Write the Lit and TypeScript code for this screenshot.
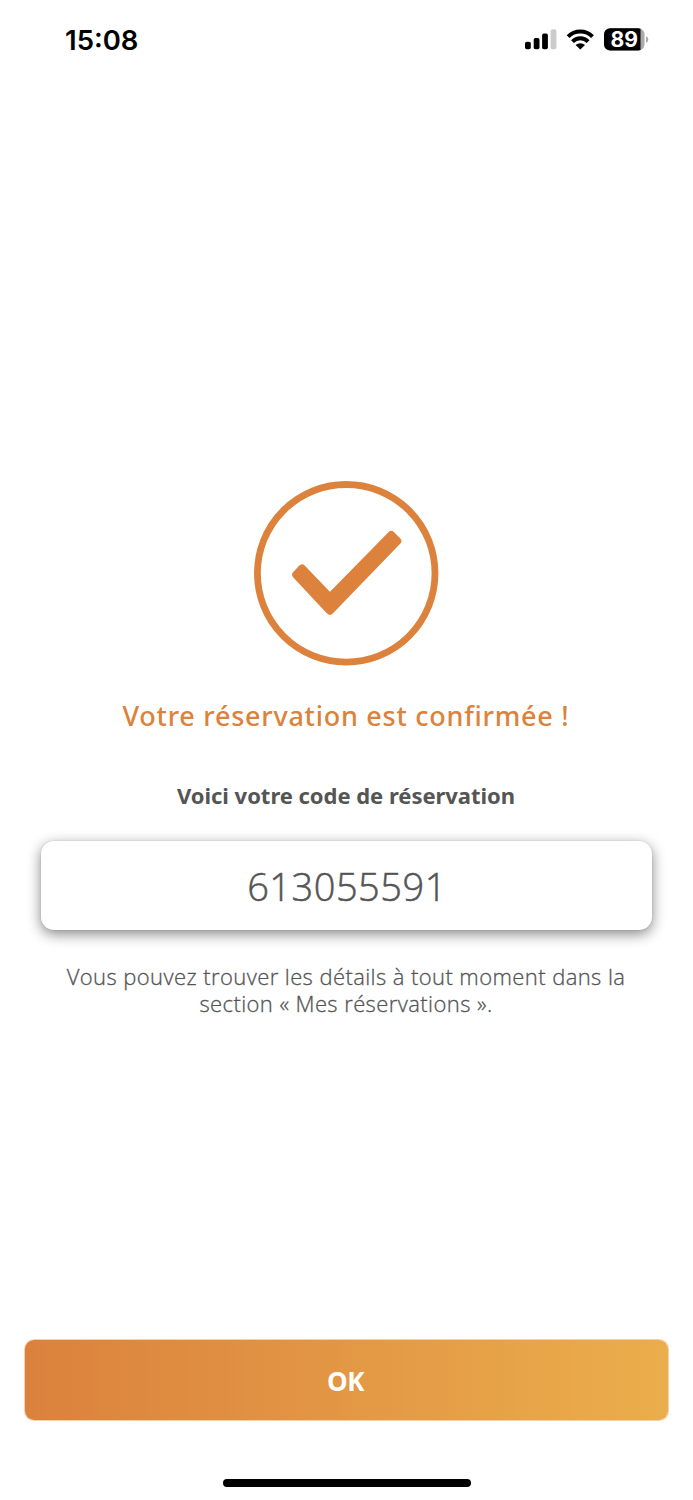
import { LitElement, html, css } from "lit";
import { customElement, property } from "lit/decorators.js";

@customElement("status-bar")
class StatusBar extends LitElement {
  @property() time = "15:08";
  @property({ type: Number }) battery = 89;

  static styles = css`
    :host {
      display: flex;
      justify-content: space-between;
      height: 80px;
      padding: 0 43px 0 65px;
      box-sizing: border-box;
      font-family: Inter, "Liberation Sans", sans-serif;
    }
    .time {
      font-size: 27.5px;
      font-weight: 600;
      line-height: 80px;
      color: #000;
    }
    .icons {
      display: block;
      width: 126px;
      height: 80px;
    }
    .level {
      font-size: 21px;
      font-weight: 700;
      fill: #fff;
    }
  `;

  render() {
    return html`
      <span class="time">${this.time}</span>
      <svg class="icons" viewBox="524 0 126 80">
        <rect x="525" y="41.7" width="5.8" height="7.6" rx="1.8" />
        <rect x="533.7" y="38" width="5.8" height="11.3" rx="1.8" />
        <rect x="542.1" y="33.6" width="5.8" height="15.7" rx="1.8" />
        <rect x="550.6" y="29.3" width="5.8" height="20" rx="1.8" fill="#cbcbcb" />
        <g fill="none" stroke="#000" stroke-width="4">
          <path d="M568.1 36.6a17.2 17.2 0 0 1 24.4 0" />
          <path d="M572.5 41.6a11 11 0 0 1 15.6 0" />
        </g>
        <path d="M580.3 49.6l-4.7-4.5a6.6 6.6 0 0 1 9.4 0z" />
        <clipPath id="cell"><rect x="604" y="28.2" width="40.5" height="22.3" rx="6.2" /></clipPath>
        <g clip-path="url(#cell)">
          <rect x="604" y="28" width="41" height="23" fill="#aaa" />
          <rect x="604" y="28" width="36.5" height="23" />
        </g>
        <path d="M646 36.2c1.4.5 2.3 1.7 2.3 3.3s-.9 2.8-2.3 3.3z" fill="#aaa" />
        <text class="level" x="610.5" y="47" textLength="27.5" lengthAdjust="spacingAndGlyphs">${this.battery}</text>
      </svg>
    `;
  }
}

@customElement("app-root")
class AppRoot extends LitElement {
  static styles = css`
    :host {
      display: flex;
      flex-direction: column;
      height: 1500px;
      background: #fff;
      color: #555;
      font-family: "Open Sans", "Noto Sans", sans-serif;
      overflow: hidden;
    }
    .content {
      display: flex;
      flex-direction: column;
      align-items: center;
      padding: 400px 1px 0 0;
      text-align: center;
      white-space: nowrap;
    }
    .check {
      display: block;
      width: 186px;
      height: 187px;
    }
    .title {
      margin: 29px 0 0;
      font-family: "Noto Sans", sans-serif;
      font-size: 27px;
      line-height: 40px;
      font-weight: 500;
      letter-spacing: 0.74px;
      color: #dc823c;
    }
    .subtitle {
      margin: 43px 0 0;
      font-family: "Noto Sans", sans-serif;
      font-size: 22px;
      line-height: 32px;
      font-weight: 700;
      letter-spacing: -0.03px;
    }
    .code {
      box-sizing: border-box;
      width: 611px;
      height: 89px;
      margin-top: 30px;
      padding-left: 2px;
      border-radius: 13px;
      background: #fff;
      box-shadow: 0 4px 14px rgba(0, 0, 0, 0.48), 0 0 2px rgba(0, 0, 0, 0.12);
      font-size: 38px;
      line-height: 90px;
      font-weight: 300;
      letter-spacing: 0.5px;
      -webkit-text-stroke: 0.5px #555;
    }
    .hint {
      margin: 33px 0 0;
      font-size: 22px;
      line-height: 26.5px;
      font-weight: 300;
      letter-spacing: 0.41px;
      -webkit-text-stroke: 0.3px #555;
    }
    .footer {
      display: flex;
      flex-direction: column;
      align-items: center;
      margin-top: auto;
      padding: 0 25px 13px;
    }
    .ok {
      width: 100%;
      height: 80px;
      padding: 0 2px 0 0;
      border: 0;
      border-radius: 9px;
      background: linear-gradient(90deg, #db813d, #ebae4c);
      box-shadow: 0 0 0 1px rgba(229, 155, 68, 0.45);
      color: #fff;
      font: 700 26px/82px "Open Sans", "Noto Sans", sans-serif;
      letter-spacing: -0.4px;
    }
    .home {
      width: 248px;
      height: 8px;
      margin-top: 59px;
      border-radius: 4px;
      background: #000;
    }
  `;

  render() {
    return html`
      <status-bar></status-bar>
      <main class="content">
        <svg class="check" viewBox="253 480 186 187">
          <circle cx="346.2" cy="573.3" r="88.8" fill="none" stroke="#dc823c" stroke-width="6.8" />
          <path
            fill="#dc823c"
            stroke="#dc823c"
            stroke-width="8"
            stroke-linejoin="round"
            d="M302 568.5L329.9 597.5L391.3 535L397.3 541L329.9 610.7L296.2 574.7Z"
          />
        </svg>
        <h1 class="title">Votre réservation est confirmée !</h1>
        <h2 class="subtitle">Voici votre code de réservation</h2>
        <div class="code">613055591</div>
        <p class="hint">
          Vous pouvez trouver les détails à tout moment dans la<br />section « Mes réservations ».
        </p>
      </main>
      <footer class="footer">
        <button class="ok">OK</button>
        <div class="home"></div>
      </footer>
    `;
  }
}
